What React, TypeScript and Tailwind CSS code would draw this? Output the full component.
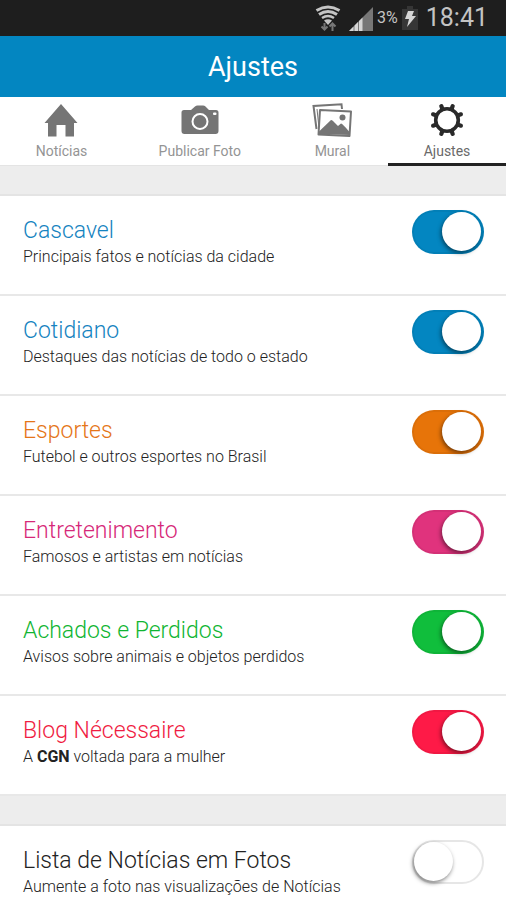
import { useState, type ReactNode } from "react";
import clsx from "clsx";

interface Category {
  id: string;
  title: string;
  description: ReactNode;
  text: string;
  track: string;
  enabled: boolean;
}

const categories: Category[] = [
  { id: "cascavel", title: "Cascavel", description: "Principais fatos e notícias da cidade", text: "text-[#1583c0]", track: "checked:bg-[#0386c1]", enabled: true },
  { id: "cotidiano", title: "Cotidiano", description: "Destaques das notícias de todo o estado", text: "text-[#1583c0]", track: "checked:bg-[#0386c1]", enabled: true },
  { id: "esportes", title: "Esportes", description: "Futebol e outros esportes no Brasil", text: "text-[#e57518]", track: "checked:bg-[#e77409]", enabled: true },
  { id: "entretenimento", title: "Entretenimento", description: "Famosos e artistas em notícias", text: "text-[#d62878]", track: "checked:bg-[#e0337d]", enabled: true },
  { id: "achados", title: "Achados e Perdidos", description: "Avisos sobre animais e objetos perdidos", text: "text-[#10b532]", track: "checked:bg-[#10be3c]", enabled: true },
  {
    id: "blog",
    title: "Blog Nécessaire",
    description: (
      <>
        A <strong className="font-bold text-[#222]">CGN</strong> voltada para a mulher
      </>
    ),
    text: "text-[#f01c42]",
    track: "checked:bg-[#fe1a47]",
    enabled: true,
  },
];

const photoList: Category = {
  id: "fotos",
  title: "Lista de Notícias em Fotos",
  description: "Aumente a foto nas visualizações de Notícias",
  text: "text-[#222]",
  track: "checked:bg-[#0386c1]",
  enabled: false,
};

function StatusBar() {
  return (
    <div className="flex h-9 shrink-0 items-center justify-end bg-[#1e1e1e] pr-[18px] text-[#c4c4c4]">
      {/* Wifi */}
      <svg width="26" height="28" viewBox="0 0 26 28" fill="none" stroke="#c4c4c4" aria-hidden="true">
        <path d="M1.500 6.500Q13-.5 24.500 6.500" strokeWidth="3" />
        <path d="M4 10.500Q13 4.500 22 10.500" strokeWidth="3" />
        <path d="M7 14Q13 10 19 14" strokeWidth="2.500" />
        <path d="M9 16.500Q13 14 17 16.500L13 21Z" fill="#c4c4c4" stroke="none" />
        <path d="M9.500 19v6.500M6.500 22.500l3 3 3-3M17.500 27v-7M14.500 22.500l3-3 3 3" stroke="#777" strokeWidth="2" />
      </svg>
      {/* Signal */}
      <svg className="ml-2" width="24" height="25" viewBox="0 0 24 25" aria-hidden="true">
        <path d="M0 25L24 1V25Z" fill="#777" />
        <path d="M0 25L4.500 20.500V25ZM5.500 25V19.500L9 16V25ZM10 25V15L13.500 11.500V25Z" fill="#d6d6d6" />
      </svg>
      <span className="ml-1 text-[16px] leading-5">3%</span>
      {/* Battery */}
      <svg className="ml-1" width="16" height="24" viewBox="0 0 16 24" aria-hidden="true">
        <path d="M5 0h6v3h5v21H0V3h5z" fill="#363636" />
        <path d="M6 5h6l-2 5h4L5 21l2-8H3z" fill="#d6d6d6" />
      </svg>
      <span className="ml-2 text-[25px] leading-8">18:41</span>
    </div>
  );
}

function HomeIcon() {
  return (
    <svg width="34" height="34" viewBox="0 0 34 34" fill="#757575" aria-hidden="true">
      <path d="M17 1L33.500 20H30V33.500H21.500V22H12.500V33.500H4V20H.5Z" />
    </svg>
  );
}

function CameraIcon() {
  return (
    <svg width="38" height="34" viewBox="0 0 38 34" aria-hidden="true">
      <path d="M3 7H10L14 3.500Q15 2.500 16.500 2.500H22Q23.500 2.500 24.500 3.500L28 7H35Q37.500 7 37.500 9.500V28Q37.500 31 34.500 31H3.500Q.5 31 .5 28V9.500Q.5 7 3 7Z" fill="#757575" />
      <circle cx="19" cy="18.500" r="7.500" fill="none" stroke="#fff" strokeWidth="2" />
      <rect x="32" y="9.500" width="3.500" height="2.500" rx="1" fill="#fff" />
    </svg>
  );
}

function PicturesIcon() {
  return (
    <svg width="40" height="34" viewBox="0 0 40 34" aria-hidden="true">
      <path d="M4.500 26L1.500 3 29.500 1.200 30 6" fill="none" stroke="#757575" strokeWidth="2" />
      <path d="M5 6L7 25" stroke="#757575" strokeWidth="1" />
      <path d="M8 7L39 8.500 37.500 33 6.500 31.500Z" fill="#fff" stroke="#757575" strokeWidth="2" strokeLinejoin="round" />
      <path d="M7 31V28.500L19 17Q20 17 21 18L26 23 29 20.500Q30.500 20.500 37.500 29V32Z" fill="#757575" />
      <circle cx="30.500" cy="14.500" r="3" fill="#757575" />
    </svg>
  );
}

function GearIcon() {
  return (
    <svg width="34" height="34" viewBox="-17 -17 34 34" fill="none" stroke="#2a2a2a" aria-hidden="true">
      <circle r="11.300" strokeWidth="3.600" />
      {/* Eight teeth, one line per opposite pair */}
      <path
        d="M-5.700-13.900L-4.600-11M5.700-13.900L4.600-11M-5.700 13.900L-4.600 11M5.700 13.900L4.600 11M-13.900-5.700L-11-4.600M13.900-5.700L11-4.600M-13.900 5.700L-11 4.600M13.900 5.700L11 4.600"
        strokeWidth="4.200"
        strokeLinecap="round"
      />
    </svg>
  );
}

const tabs = [
  { label: "Notícias", icon: <HomeIcon /> },
  { label: "Publicar Foto", icon: <CameraIcon /> },
  { label: "Mural", icon: <PicturesIcon /> },
  { label: "Ajustes", icon: <GearIcon /> },
];

function SettingRow({ item }: { item: Category }) {
  const [checked, setChecked] = useState(item.enabled);

  return (
    <li className="flex h-[100px] items-start justify-between border-b-2 border-[#e8e8e8] bg-white pt-[14px] pr-[22px] pl-[23px]">
      <label htmlFor={item.id} className="min-w-0 flex-1 pt-[7px]">
        <span className={clsx("block text-[23px] leading-7 font-light", item.text)}>{item.title}</span>
        <span className="block text-[16px] leading-6 font-light text-[#222]">{item.description}</span>
      </label>
      <div className="relative h-11 w-[72px] shrink-0">
        <input
          id={item.id}
          type="checkbox"
          role="switch"
          checked={checked}
          onChange={(e) => setChecked(e.target.checked)}
          className={clsx(
            "peer block h-full w-full cursor-pointer appearance-none rounded-full border-2 border-[#e6e6e6] bg-white checked:border-black/5",
            item.track
          )}
        />
        <span className="pointer-events-none absolute top-[2px] left-[2px] size-[39px] rounded-full bg-white shadow-[-1px_2px_4px_rgba(0,0,0,0.5)] transition-transform peer-checked:translate-x-7" />
      </div>
    </li>
  );
}

export default function App() {
  const [active, setActive] = useState("Ajustes");

  return (
    <div className="flex h-screen flex-col overflow-hidden bg-[#ededed] font-[Roboto,sans-serif]">
      <StatusBar />
      <header className="flex h-[61px] shrink-0 items-center justify-center bg-[#0386c1]">
        <h1 className="text-[27px] leading-8 text-white">Ajustes</h1>
      </header>

      <nav className="flex h-[69px] shrink-0 bg-white">
        {tabs.map((tab) => (
          <button
            key={tab.label}
            type="button"
            onClick={() => setActive(tab.label)}
            className={clsx(
              "flex flex-auto flex-col items-center gap-1 pt-[6px] text-[14px] leading-5",
              active === tab.label ? "border-b-3 border-[#222] text-[#6a6a6a]" : "border-b border-[#e4e4e4] text-[#949494]"
            )}
          >
            {tab.icon}
            <span>{tab.label}</span>
          </button>
        ))}
      </nav>

      <main className="flex-1 overflow-y-auto pt-7 [scrollbar-width:none]">
        <ul className="border-t-2 border-[#e4e4e4]">
          {categories.map((item) => (
            <SettingRow key={item.id} item={item} />
          ))}
        </ul>
        <ul className="mt-7 border-t-2 border-[#e4e4e4]">
          <SettingRow item={photoList} />
        </ul>
      </main>
    </div>
  );
}
